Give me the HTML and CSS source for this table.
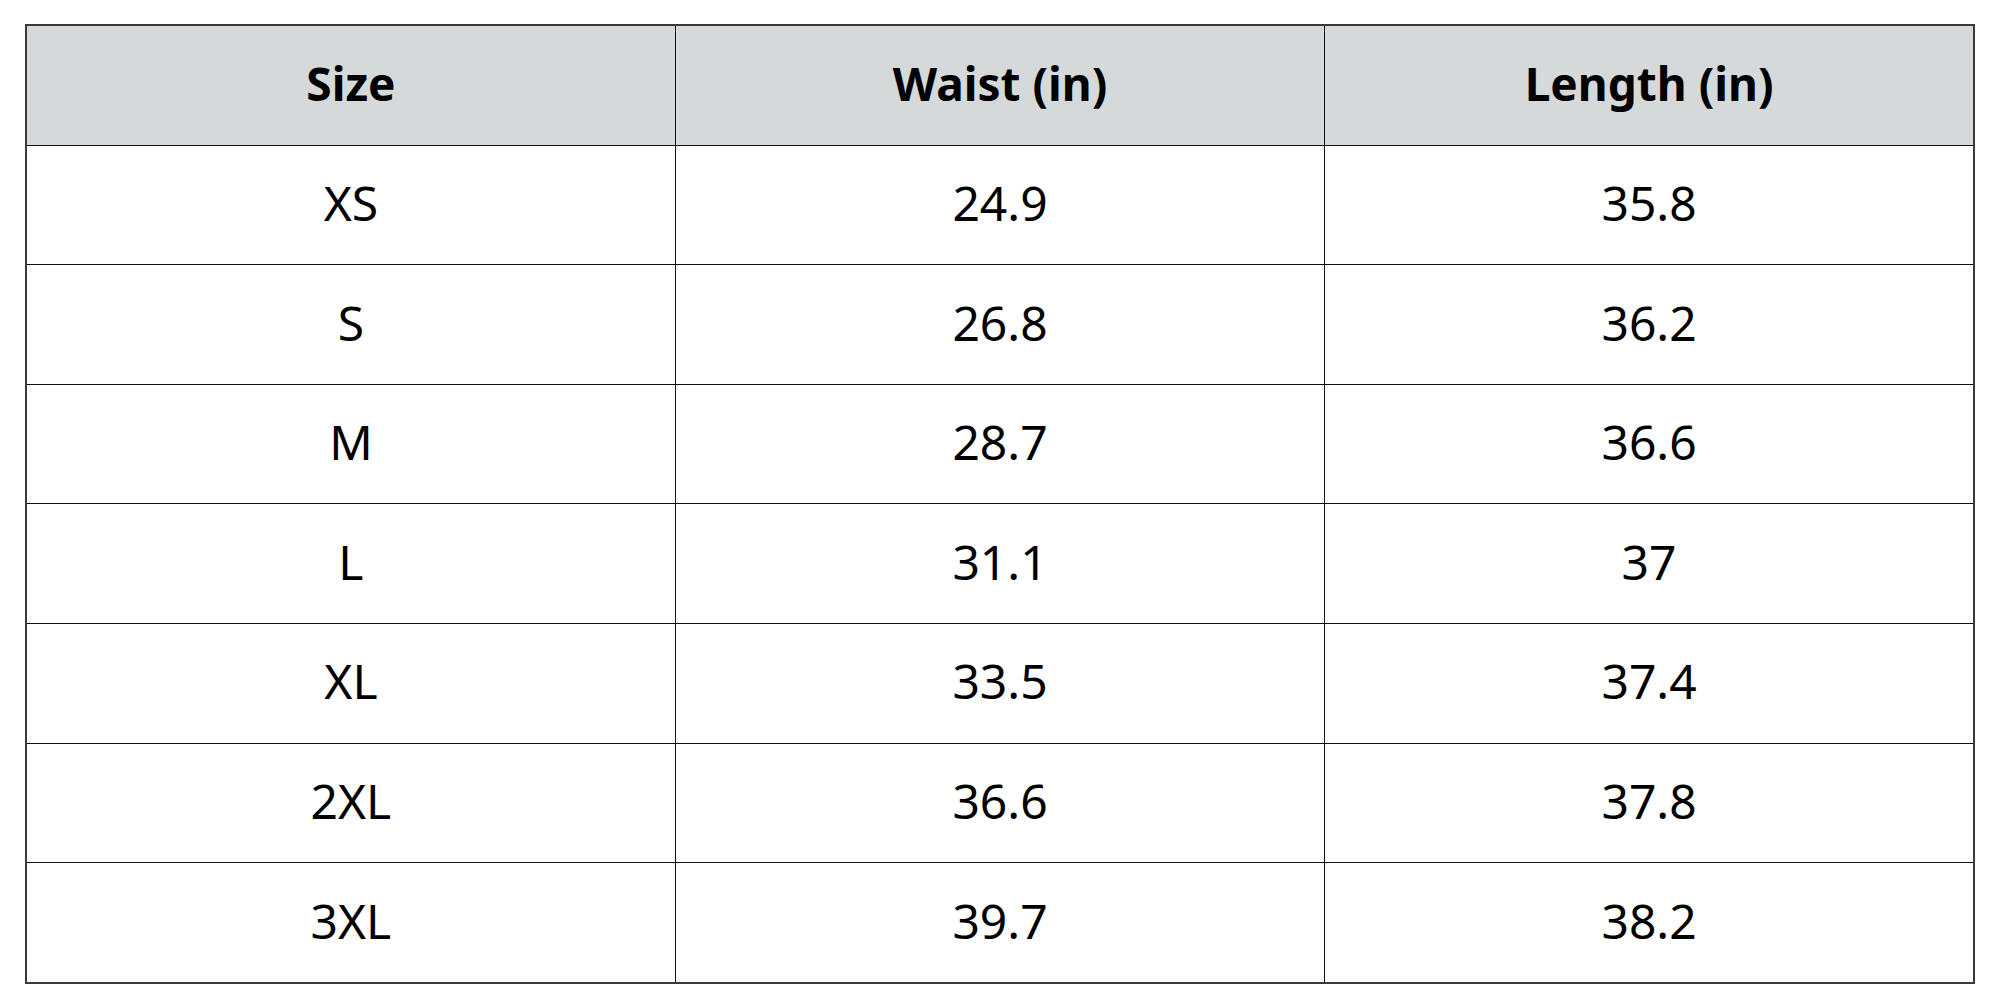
FILE: index.html
```html
<!DOCTYPE html>
<html>
<head>
<meta charset="utf-8">
<link rel="stylesheet" href="styles.css">
</head>
<body>
<table class="size-table">
  <thead>
    <tr><th>Size</th><th>Waist (in)</th><th>Length (in)</th></tr>
  </thead>
  <tbody>
    <tr><td>XS</td><td>24.9</td><td>35.8</td></tr>
    <tr><td>S</td><td>26.8</td><td>36.2</td></tr>
    <tr><td>M</td><td>28.7</td><td>36.6</td></tr>
    <tr><td>L</td><td>31.1</td><td>37</td></tr>
    <tr><td>XL</td><td>33.5</td><td>37.4</td></tr>
    <tr><td>2XL</td><td>36.6</td><td>37.8</td></tr>
    <tr><td>3XL</td><td>39.7</td><td>38.2</td></tr>
  </tbody>
</table>
</body>
</html>
```

FILE: styles.css
```css
html, body {
  margin: 0;
  background: #ffffff;
}
body {
  padding: 24px 25px;
  font-family: "Noto Sans", "Open Sans", sans-serif;
  color: #000;
}
.size-table {
  width: 1950px;
  border-collapse: collapse;
  table-layout: fixed;
  border: 2px solid #3a3a3a;
}
.size-table th,
.size-table td {
  border: 1px solid #111;
  text-align: center;
  vertical-align: middle;
  height: 114.6px;
  padding: 0 0 4px;
  font-size: 46px;
  line-height: 1.2;
}
.size-table th {
  background: #d5d9da;
  font-weight: 700;
}
.size-table td {
  font-weight: 400;
  font-size: 48px;
}
```
